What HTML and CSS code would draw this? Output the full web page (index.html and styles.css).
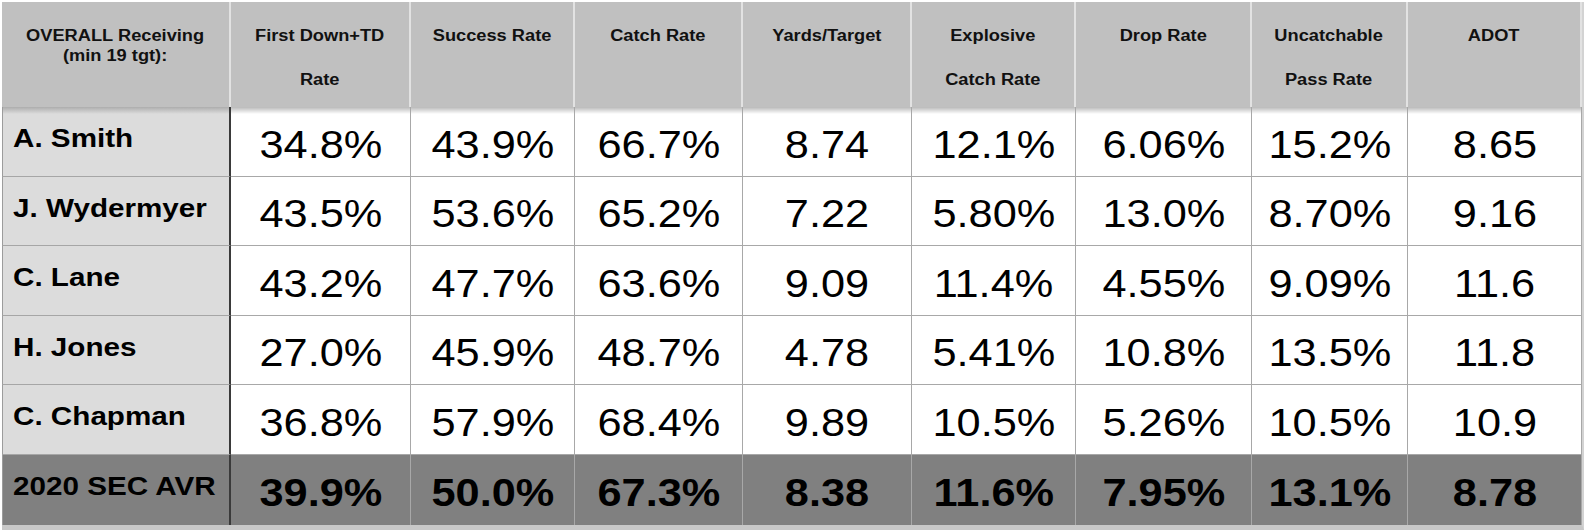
FILE: index.html
```html
<!DOCTYPE html>
<html lang="en">
<head>
<meta charset="utf-8">
<title>OVERALL Receiving</title>
<link rel="stylesheet" href="styles.css">
</head>
<body>
<div class="sheet">
  <div class="hd first"><span class="sx">OVERALL Receiving<br>(min 19 tgt):</span></div>
  <div class="hd"><span class="sx">First Down+TD<br>Rate</span></div>
  <div class="hd"><span class="sx">Success Rate</span></div>
  <div class="hd"><span class="sx">Catch Rate</span></div>
  <div class="hd"><span class="sx">Yards/Target</span></div>
  <div class="hd"><span class="sx">Explosive<br>Catch Rate</span></div>
  <div class="hd"><span class="sx">Drop Rate</span></div>
  <div class="hd"><span class="sx">Uncatchable<br>Pass Rate</span></div>
  <div class="hd"><span class="sx">ADOT</span></div>

  <div class="nm top"><span class="sx">A. Smith</span></div>
  <div class="val top"><span class="sx">34.8%</span></div>
  <div class="val top"><span class="sx">43.9%</span></div>
  <div class="val top"><span class="sx">66.7%</span></div>
  <div class="val top"><span class="sx">8.74</span></div>
  <div class="val top"><span class="sx">12.1%</span></div>
  <div class="val top"><span class="sx">6.06%</span></div>
  <div class="val top"><span class="sx">15.2%</span></div>
  <div class="val top"><span class="sx">8.65</span></div>

  <div class="nm"><span class="sx">J. Wydermyer</span></div>
  <div class="val"><span class="sx">43.5%</span></div>
  <div class="val"><span class="sx">53.6%</span></div>
  <div class="val"><span class="sx">65.2%</span></div>
  <div class="val"><span class="sx">7.22</span></div>
  <div class="val"><span class="sx">5.80%</span></div>
  <div class="val"><span class="sx">13.0%</span></div>
  <div class="val"><span class="sx">8.70%</span></div>
  <div class="val"><span class="sx">9.16</span></div>

  <div class="nm"><span class="sx">C. Lane</span></div>
  <div class="val"><span class="sx">43.2%</span></div>
  <div class="val"><span class="sx">47.7%</span></div>
  <div class="val"><span class="sx">63.6%</span></div>
  <div class="val"><span class="sx">9.09</span></div>
  <div class="val"><span class="sx">11.4%</span></div>
  <div class="val"><span class="sx">4.55%</span></div>
  <div class="val"><span class="sx">9.09%</span></div>
  <div class="val"><span class="sx">11.6</span></div>

  <div class="nm"><span class="sx">H. Jones</span></div>
  <div class="val"><span class="sx">27.0%</span></div>
  <div class="val"><span class="sx">45.9%</span></div>
  <div class="val"><span class="sx">48.7%</span></div>
  <div class="val"><span class="sx">4.78</span></div>
  <div class="val"><span class="sx">5.41%</span></div>
  <div class="val"><span class="sx">10.8%</span></div>
  <div class="val"><span class="sx">13.5%</span></div>
  <div class="val"><span class="sx">11.8</span></div>

  <div class="nm"><span class="sx">C. Chapman</span></div>
  <div class="val"><span class="sx">36.8%</span></div>
  <div class="val"><span class="sx">57.9%</span></div>
  <div class="val"><span class="sx">68.4%</span></div>
  <div class="val"><span class="sx">9.89</span></div>
  <div class="val"><span class="sx">10.5%</span></div>
  <div class="val"><span class="sx">5.26%</span></div>
  <div class="val"><span class="sx">10.5%</span></div>
  <div class="val"><span class="sx">10.9</span></div>

  <div class="nm avg"><span class="sx">2020 SEC AVR</span></div>
  <div class="val avg"><span class="sx">39.9%</span></div>
  <div class="val avg"><span class="sx">50.0%</span></div>
  <div class="val avg"><span class="sx">67.3%</span></div>
  <div class="val avg"><span class="sx">8.38</span></div>
  <div class="val avg"><span class="sx">11.6%</span></div>
  <div class="val avg"><span class="sx">7.95%</span></div>
  <div class="val avg"><span class="sx">13.1%</span></div>
  <div class="val avg"><span class="sx">8.78</span></div>
</div>
</body>
</html>
```
FILE: styles.css
```css
html, body {
  margin: 0;
  padding: 0;
  background: #ffffff;
}

body {
  font-family: "Liberation Sans", Arial, Helvetica, sans-serif;
  color: #000;
}

.sheet {
  display: grid;
  grid-template-columns: 229px 180px 164px 168px 169px 164px 176px 156px 174px;
  grid-template-rows: 105px 70px 69px 70px 69px 70px 70px;
  width: 1580px;
  margin: 2px 0 0 2px;
  border-right: 2px solid #d3d3d3;
  border-bottom: 5px solid #c8c8c8;
}

.sheet > div {
  box-sizing: border-box;
  overflow: hidden;
  white-space: nowrap;
}

.sx {
  display: inline-block;
  transform: scaleX(1.14);
  transform-origin: center top;
}

/* header */
.hd {
  background: #c0c0c0;
  border-right: 2px solid #e2e2e2;
  text-align: center;
  font-weight: 700;
  font-size: 16px;
  line-height: 44px;
  padding-top: 12px;
  color: #111;
}

.hd.first {
  line-height: 20px;
  padding-top: 24px;
}

/* player names */
.nm {
  background: #dcdcdc;
  border-left: 1px solid #9c9c9c;
  border-right: 2px solid #3a3a3a;
  border-bottom: 1px solid #a6a6a6;
  font-weight: 700;
  font-size: 26px;
  line-height: 30px;
  padding: 16px 0 0 10px;
}

.nm .sx {
  transform-origin: left top;
}

/* values */
.val {
  background: #ffffff;
  border-right: 1px solid #a8a8a8;
  border-bottom: 1px solid #a8a8a8;
  font-size: 38px;
  display: flex;
  align-items: center;
  justify-content: center;
  padding-top: 7px;
}

.val .sx {
  transform-origin: center center;
}

.val.top {
  background: linear-gradient(#b9b9b9, #ffffff 7px);
}

.nm.top {
  background: linear-gradient(#adadad, #dcdcdc 7px);
}

/* average row */
.avg {
  background: #808080;
  border-bottom: none;
}

.nm.avg {
  background: #808080;
}

.val.avg {
  font-weight: 700;
  padding-top: 7px;
}
```
